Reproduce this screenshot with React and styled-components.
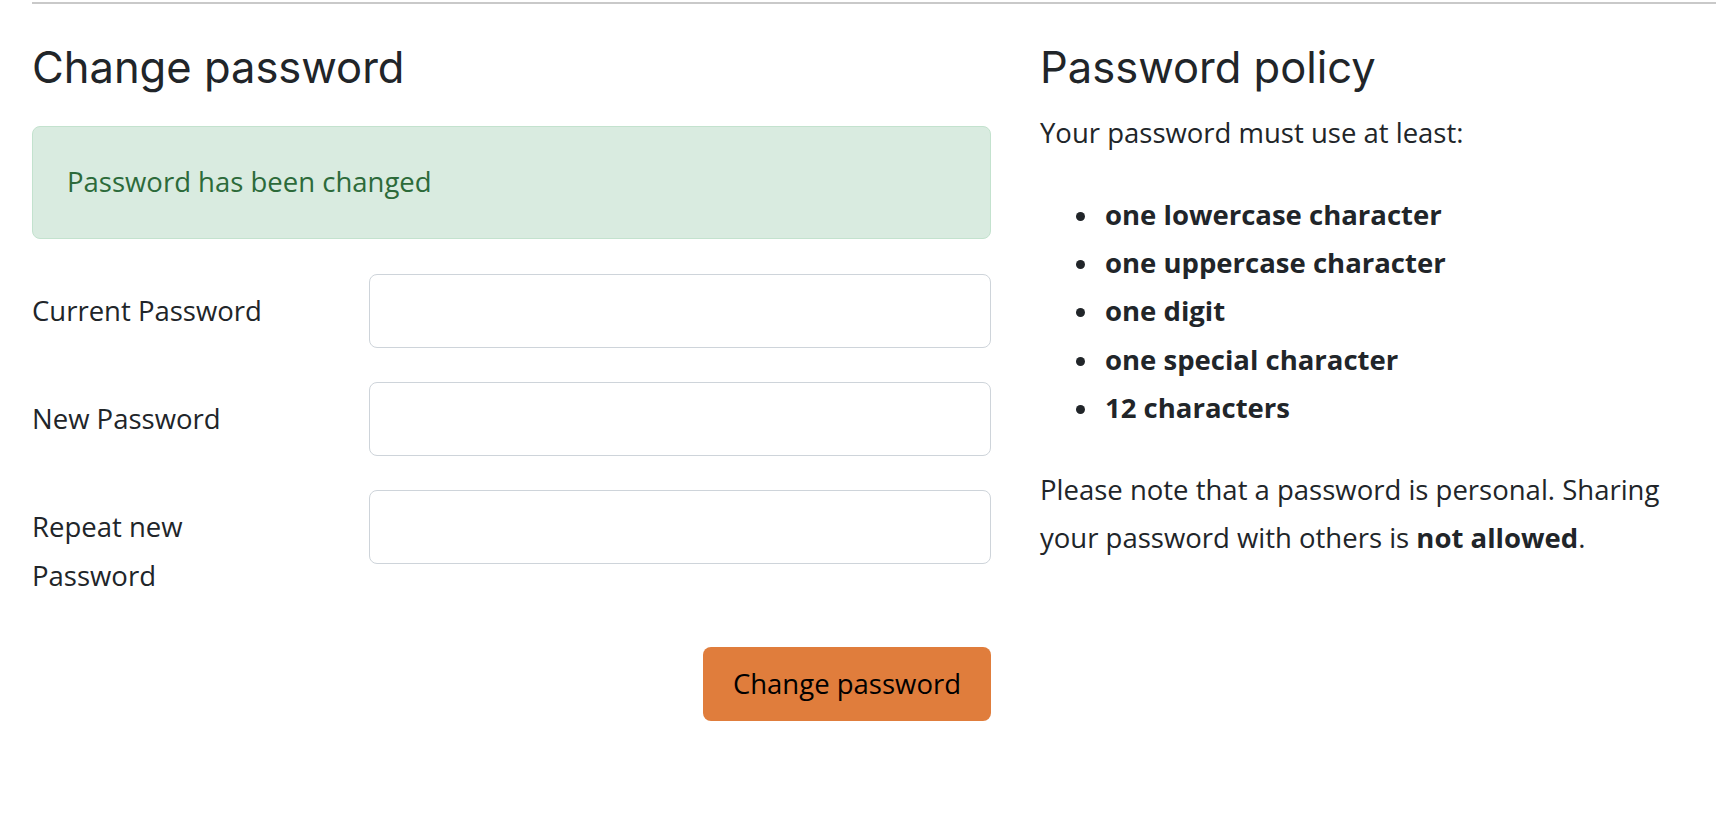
import React from "react";
import styled, { createGlobalStyle } from "styled-components";

const GlobalStyle = createGlobalStyle`
  html, body { margin: 0; padding: 0; background: #ffffff; }
  body {
    font-family: "Open Sans", "Noto Sans", sans-serif;
    font-size: 27.5px;
    line-height: 48.4px;
    color: #212529;
    overflow: hidden;
  }
  * { box-sizing: border-box; }
`;

const Page = styled.div`
  padding-left: 32px;
  width: 1716px;
`;

const Rule = styled.div`
  margin-top: 2px;
  border-top: 2px solid #c9c9c9;
`;

const Columns = styled.div`
  display: grid;
  grid-template-columns: 959px 640px;
  column-gap: 49px;
`;

const Column = styled.section`
  display: flex;
  flex-direction: column;
  align-items: stretch;
`;

const Heading = styled.h2`
  font-family: Inter, "Open Sans", sans-serif;
  font-weight: 400;
  font-size: 43.5px;
  line-height: 52.2px;
  color: #212529;
  margin: 37px 0 ${(p) => p.$after}px 0;
`;

const Alert = styled.div`
  background: #d9ebe0;
  border: 1px solid #c3e2ce;
  border-radius: 8px;
  color: #2c6a3a;
  padding: 31px 34px;
  margin-bottom: 35px;
`;

const FormRow = styled.div`
  display: grid;
  grid-template-columns: 337px 1fr;
  align-items: start;
  margin-bottom: 34px;
`;

const Label = styled.label`
  padding: 13px 70px 13px 0;
  color: #212529;
`;

const Input = styled.input`
  display: block;
  width: 100%;
  height: 74px;
  border: 1.5px solid #ced4da;
  border-radius: 8px;
  background: #fff;
  font: inherit;
  padding: 0 18px;
  outline: none;
`;

const Actions = styled.div`
  display: flex;
  justify-content: flex-end;
`;

const Button = styled.button`
  height: 74px;
  padding: 0 30px;
  border: none;
  border-radius: 8px;
  background: #e07d3c;
  color: #000;
  font: inherit;
  cursor: pointer;
`;

const Para = styled.p`
  margin: 0 0 ${(p) => p.$after || 0}px 0;
`;

const List = styled.ul`
  margin: 0 0 33px 0;
  padding-left: 65px;
  font-weight: 700;
  list-style: none;
`;

const Item = styled.li`
  position: relative;
  &::before {
    content: "";
    position: absolute;
    left: -29px;
    top: 21px;
    width: 9px;
    height: 9px;
    border-radius: 50%;
    background: #212529;
  }
`;

const Strong = styled.strong`
  font-weight: 700;
`;

const rules = [
  "one lowercase character",
  "one uppercase character",
  "one digit",
  "one special character",
  "12 characters",
];

const fields = [
  { id: "current", label: "Current Password" },
  { id: "new", label: "New Password" },
  { id: "repeat", label: "Repeat new Password" },
];

export default function App() {
  return (
    <>
      <GlobalStyle />
      <Page>
        <Rule />
        <Columns>
          <Column>
            <Heading $after={33}>Change password</Heading>
            <Alert>Password has been changed</Alert>
            {fields.map((f) => (
              <FormRow key={f.id}>
                <Label htmlFor={f.id}>{f.label}</Label>
                <Input id={f.id} type="password" />
              </FormRow>
            ))}
            <Actions>
              <Button type="button">Change password</Button>
            </Actions>
          </Column>
          <Column>
            <Heading $after={16}>Password policy</Heading>
            <Para $after={33}>Your password must use at least:</Para>
            <List>
              {rules.map((r) => (
                <Item key={r}>{r}</Item>
              ))}
            </List>
            <Para>
              Please note that a password is personal. Sharing your password
              with others is <Strong>not allowed</Strong>.
            </Para>
          </Column>
        </Columns>
      </Page>
    </>
  );
}
